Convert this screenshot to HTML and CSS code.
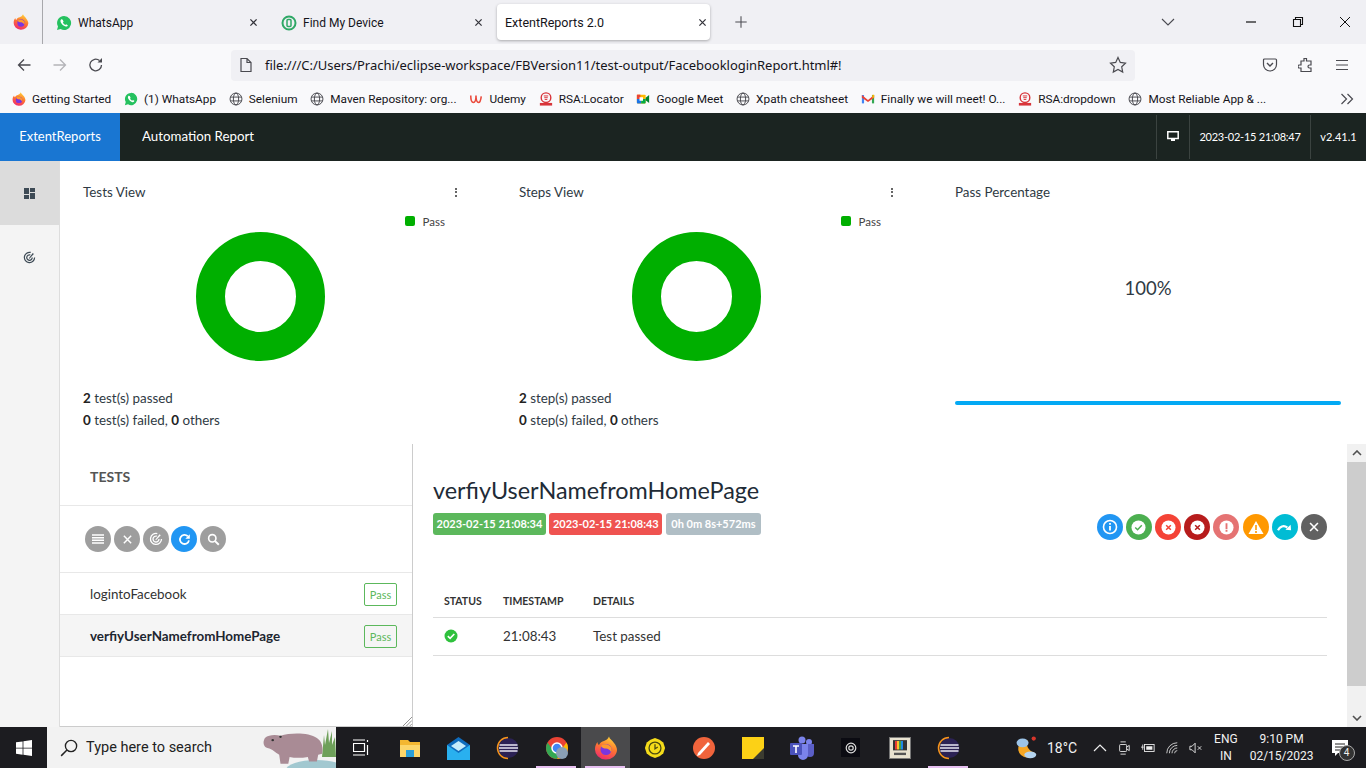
FILE: index.html
```html
<!DOCTYPE html>
<html lang="en">
<head>
    <meta charset="UTF-8">
    <title>ExtentReports 2.0</title>
    <link rel="stylesheet" href="styles.css">
</head>
<body>
    <svg class="defs" width="0" height="0">
        <defs>
            <linearGradient id="fox" x1="0.7" y1="0" x2="0.3" y2="1">
                <stop offset="0" stop-color="#ffd53a"/>
                <stop offset="0.45" stop-color="#ff7a2e"/>
                <stop offset="1" stop-color="#f0286e"/>
            </linearGradient>
        </defs>
        <symbol id="firefox" viewBox="0 0 24 24">
            <path d="M15 .5c.5 2.500 3 3.500 5 6.500 2 2.500 3 5 3 7a11 10 0 1 1-22-1c0-3 1-5 2.500-7 0 1.500.5 2.500 1.500 3 1-2.500 3-3.500 5-4 2-.7 4-2 5-4.500z" fill="url(#fox)"/>
            <circle cx="12" cy="13.500" r="5.500" fill="#7a35e0"/>
            <path d="M7 10c2-2 6-2.500 9 0 1.500 1.500 2 4 1 6-1-2-3-3.500-5-3.500-2 0-4-.5-5-2.500z" fill="#ff9a2e"/>
        </symbol>
        <symbol id="whatsapp" viewBox="0 0 24 24">
            <path d="M12 1.500a10.500 10.500 0 0 0-9 15.800L1.500 22.500l5.400-1.400A10.500 10.500 0 1 0 12 1.500z" fill="#25c15f"/>
            <path d="M8.500 6.500c-.8 0-1.800 1-1.800 2.600 0 3 4.300 8 8.300 8.300 1.500 0 2.700-1 2.700-2.200l-2.500-1.400-1.200 1.200c-1.500-.5-3-2-3.700-3.700l1.100-1.200-1.300-3z" fill="#fff"/>
        </symbol>
        <symbol id="globe" viewBox="0 0 16 16">
            <g fill="none" stroke="#4a4a50" stroke-width="1.100">
                <circle cx="8" cy="8" r="6.800"/>
                <ellipse cx="8" cy="8" rx="3" ry="6.800"/>
                <path d="M1.500 5.800h13M1.500 10.200h13"/>
            </g>
        </symbol>
        <symbol id="rsa" viewBox="0 0 16 16">
            <circle cx="8" cy="6.500" r="5.500" fill="none" stroke="#d8343a" stroke-width="1.600"/>
            <path d="M5.500 4.500h5M6 6.500h4M6.500 8.500h3" stroke="#d8343a" stroke-width="1.100"/>
            <rect x="1" y="12.500" width="14" height="3" fill="#d8343a"/>
        </symbol>
        <symbol id="eclipse" viewBox="0 0 24 24">
            <circle cx="12.500" cy="12" r="10" fill="#2c2255"/>
            <path d="M12 1.500a10.500 10.500 0 0 0 0 21" fill="none" stroke="#f7941e" stroke-width="1.500"/>
            <path d="M3.500 9h18M3 12h19M3.500 15h18" stroke="#e8e6f2" stroke-width="1.500"/>
        </symbol>
        <symbol id="radar" viewBox="0 0 16 16">
            <g fill="none" stroke="currentColor" stroke-width="1.500">
                <path d="M9.500 1.800A6.300 6.300 0 1 0 14.300 8"/>
                <path d="M9 4.800A3.400 3.400 0 1 0 11.400 8"/>
            </g>
            <path d="M7.200 8.800 12 2.500l1.400 1.100-5.400 5.800z" fill="currentColor"/>
        </symbol>
        <symbol id="cross" viewBox="0 0 16 16">
            <path d="M3.500 3.500l9 9M12.500 3.500l-9 9" fill="none" stroke="currentColor" stroke-width="1.800"/>
        </symbol>
    </svg>

    <div class="window">
        <div class="tabstrip">
            <div class="ff-button"><svg class="ico-16"><use href="#firefox"/></svg></div>
            <div class="tab">
                <svg class="ico-16"><use href="#whatsapp"/></svg>
                <span class="tab-title">WhatsApp</span>
                <svg class="tab-close"><use href="#cross"/></svg>
            </div>
            <div class="tab">
                <svg class="ico-16" viewBox="0 0 16 16"><circle cx="8" cy="8" r="6.500" fill="none" stroke="#2fa866" stroke-width="2"/><rect x="6" y="4.500" width="4" height="7" rx="1" fill="none" stroke="#2fa866" stroke-width="1.500"/></svg>
                <span class="tab-title">Find My Device</span>
                <svg class="tab-close"><use href="#cross"/></svg>
            </div>
            <div class="tab tab-active">
                <span class="tab-title">ExtentReports 2.0</span>
                <svg class="tab-close"><use href="#cross"/></svg>
            </div>
            <svg class="new-tab" viewBox="0 0 16 16"><path d="M8 1.500v13M1.500 8h13" stroke="#4a4a50" stroke-width="1.200"/></svg>
            <svg class="tab-list" viewBox="0 0 14 8"><path d="M1 1l6 6 6-6" fill="none" stroke="#4a4a50" stroke-width="1.100"/></svg>
            <div class="win-controls">
                <svg class="win-btn" viewBox="0 0 12 12"><path d="M1 6h10" stroke="#111" stroke-width="1.200"/></svg>
                <svg class="win-btn" viewBox="0 0 12 12"><path d="M1.500 3.500h7v7h-7zM3.500 3.500v-2h7v7h-2" fill="none" stroke="#111" stroke-width="1.100"/></svg>
                <svg class="win-btn" viewBox="0 0 12 12"><path d="M1 1l10 10M11 1L1 11" stroke="#111" stroke-width="1"/></svg>
            </div>
        </div>

        <div class="toolbar">
            <svg class="tool-ico back" viewBox="0 0 16 16"><path d="M14.500 8h-12M8 2.500 2.500 8 8 13.500" fill="none" stroke="#4a4a50" stroke-width="1.300"/></svg>
            <svg class="tool-ico forward" viewBox="0 0 16 16"><path d="M1.500 8h12M8 2.500 13.500 8 8 13.500" fill="none" stroke="#b4b4b8" stroke-width="1.300"/></svg>
            <svg class="tool-ico reload" viewBox="0 0 16 16"><path d="M13.500 8a5.800 5.800 0 1 1-2-4.400" fill="none" stroke="#4a4a50" stroke-width="1.300"/><path d="M14 1v4.500H9.500z" fill="#4a4a50"/></svg>
            <div class="urlbar">
                <svg class="page-ico" viewBox="0 0 14 16"><path d="M2 1.500h6l4 4v9H2zM8 1.500v4h4" fill="none" stroke="#4a4a50" stroke-width="1.200"/></svg>
                <span class="url-text">file:///C:/Users/Prachi/eclipse-workspace/FBVersion11/test-output/FacebookloginReport.html#!</span>
                <svg class="star" viewBox="0 0 18 18"><path d="M9 1.500l2.300 4.900 5.200.7-3.800 3.700 1 5.300L9 13.500l-4.700 2.600 1-5.300L1.500 7.100l5.200-.7z" fill="none" stroke="#4a4a50" stroke-width="1.200"/></svg>
            </div>
            <div class="tool-right">
                <svg class="ico-16" viewBox="0 0 16 16"><path d="M2.500 2h11c.6 0 1 .4 1 1v4.500a6.500 6.500 0 0 1-13 0V3c0-.6.4-1 1-1z" fill="none" stroke="#4a4a50" stroke-width="1.200"/><path d="M5 6l3 3 3-3" fill="none" stroke="#4a4a50" stroke-width="1.400"/></svg>
                <svg class="ico-16" viewBox="0 0 16 16"><path d="M6 1.500h2.500V4H13v4h-1.500a1.500 1.500 0 0 0 0 3H13v3.500H3V11H1.500a1.500 1.500 0 0 1 0-3H3V4h3z" fill="none" stroke="#4a4a50" stroke-width="1.200"/></svg>
                <svg class="ico-16" viewBox="0 0 16 16"><path d="M2 3.500h12M2 8h12M2 12.500h12" stroke="#4a4a50" stroke-width="1.200"/></svg>
            </div>
        </div>

        <div class="bookmarks">
            <div class="bm"><svg class="ico-14"><use href="#firefox"/></svg><span>Getting Started</span></div>
            <div class="bm"><svg class="ico-14"><use href="#whatsapp"/></svg><span>(1) WhatsApp</span></div>
            <div class="bm"><svg class="ico-14"><use href="#globe"/></svg><span>Selenium</span></div>
            <div class="bm"><svg class="ico-14"><use href="#globe"/></svg><span>Maven Repository: org...</span></div>
            <div class="bm"><svg class="ico-14" viewBox="0 0 16 16"><path d="M2 4c0 5 1 8 3 8s3-4 3-8c0 5 1 8 3 8s2.500-3 3-7" fill="none" stroke="#ea4a3c" stroke-width="1.800"/></svg><span>Udemy</span></div>
            <div class="bm"><svg class="ico-14"><use href="#rsa"/></svg><span>RSA:Locator</span></div>
            <div class="bm"><svg class="ico-14" viewBox="0 0 16 16"><rect x="1" y="3" width="10" height="10" rx="1" fill="#ffba00"/><path d="M1 8h5v5H2a1 1 0 0 1-1-1z" fill="#1a73e8"/><path d="M6 8h5v4a1 1 0 0 1-1 1H6z" fill="#00ac47"/><path d="M11 6.500l4-3v9l-4-3z" fill="#00832d"/><path d="M1 3h4v5H1z" fill="#ea4335"/><rect x="4" y="6" width="4" height="4" fill="#fff"/></svg><span>Google Meet</span></div>
            <div class="bm"><svg class="ico-14"><use href="#globe"/></svg><span>Xpath cheatsheet</span></div>
            <div class="bm"><svg class="ico-14" viewBox="0 0 16 16"><path d="M1 3.500h2.500V13H1z" fill="#4285f4"/><path d="M12.500 3.500H15V13h-2.500z" fill="#34a853"/><path d="M1 3.500l7 5.500 7-5.500v3l-7 5-7-5z" fill="#ea4335"/><path d="M13 3h2v3l-2 1.500z" fill="#fbbc04"/></svg><span>Finally we will meet! O...</span></div>
            <div class="bm"><svg class="ico-14"><use href="#rsa"/></svg><span>RSA:dropdown</span></div>
            <div class="bm"><svg class="ico-14"><use href="#globe"/></svg><span>Most Reliable App &amp; ...</span></div>
            <svg class="bm-more" viewBox="0 0 14 12"><path d="M1.500 1l5 5-5 5M7.500 1l5 5-5 5" fill="none" stroke="#4a4a50" stroke-width="1.200"/></svg>
        </div>

        <header class="topbar">
            <div class="brand">ExtentReports</div>
            <div class="report-name">Automation Report</div>
            <div class="top-right">
                <div class="top-cell top-ico">
                    <svg width="12" height="11" viewBox="0 0 12 11"><path d="M.8.800h10.400v6.700H.8z" fill="none" stroke="#fff" stroke-width="1.500"/><path d="M4 10h4V8H4z" fill="#fff"/></svg>
                </div>
                <div class="top-cell top-date">2023-02-15 21:08:47</div>
                <div class="top-cell top-ver">v2.41.1</div>
            </div>
        </header>

        <div class="content">
            <nav class="side-nav">
                <div class="side-item side-active">
                    <svg width="11" height="11" viewBox="0 0 11 11" fill="#3d4a55"><path d="M0 0h5v6H0zM6 0h5v4H6zM0 7h5v4H0zM6 5h5v6H6z"/></svg>
                </div>
                <div class="side-item">
                    <svg class="side-radar"><use href="#radar"/></svg>
                </div>
            </nav>

            <main class="report">
                <section class="dashboard">
                    <div class="dash-card">
                        <div class="dash-head"><span>Tests View</span><span class="dots"><i></i><i></i><i></i></span></div>
                        <div class="legend"><i class="legend-box"></i>Pass</div>
                        <div class="donut-wrap"><div class="donut"></div></div>
                        <p class="dash-line"><b>2</b> test(s) passed</p>
                        <p class="dash-line"><b>0</b> test(s) failed, <b>0</b> others</p>
                    </div>
                    <div class="dash-card">
                        <div class="dash-head"><span>Steps View</span><span class="dots"><i></i><i></i><i></i></span></div>
                        <div class="legend"><i class="legend-box"></i>Pass</div>
                        <div class="donut-wrap"><div class="donut"></div></div>
                        <p class="dash-line"><b>2</b> step(s) passed</p>
                        <p class="dash-line"><b>0</b> step(s) failed, <b>0</b> others</p>
                    </div>
                    <div class="dash-card dash-percent">
                        <div class="dash-head"><span>Pass Percentage</span></div>
                        <div class="percent-value">100%</div>
                        <div class="percent-bar"></div>
                    </div>
                </section>

                <section class="split">
                    <aside class="test-list">
                        <h3 class="list-title">TESTS</h3>
                        <div class="list-tools">
                            <span class="round grey"><svg width="12" height="10" viewBox="0 0 12 10"><path d="M0 1h12M0 3.700h12M0 6.300h12M0 9h12" stroke="#fff" stroke-width="1.600"/></svg></span>
                            <span class="round grey"><svg width="13" height="13"><use href="#cross"/></svg></span>
                            <span class="round grey"><svg width="14" height="14"><use href="#radar"/></svg></span>
                            <span class="round blue"><svg width="13" height="13" viewBox="0 0 16 16"><path d="M13.500 9a5.600 5.600 0 1 1-1.500-5" fill="none" stroke="#fff" stroke-width="2.200"/><path d="M14.500 1.500V7H9z" fill="#fff"/></svg></span>
                            <span class="round grey"><svg width="13" height="13" viewBox="0 0 16 16"><circle cx="6.500" cy="6.500" r="4.500" fill="none" stroke="#fff" stroke-width="2"/><path d="M10 10l4.500 4.500" stroke="#fff" stroke-width="2.400"/></svg></span>
                        </div>
                        <div class="test-row"><span>logintoFacebook</span><span class="pass-tag">Pass</span></div>
                        <div class="test-row test-row-on"><span>verfiyUserNamefromHomePage</span><span class="pass-tag">Pass</span></div>
                        <svg class="resize-grip" viewBox="0 0 8 8"><path d="M0 8l8-8M3 8l5-5M6 8l2-2" stroke="#888" stroke-width=".8"/></svg>
                    </aside>

                    <div class="test-detail">
                        <div class="detail-head">
                            <div>
                                <h2 class="detail-title">verfiyUserNamefromHomePage</h2>
                                <div class="labels">
                                    <span class="label l-green">2023-02-15 21:08:34</span>
                                    <span class="label l-red">2023-02-15 21:08:43</span>
                                    <span class="label l-grey">0h 0m 8s+572ms</span>
                                </div>
                            </div>
                            <div class="status-tools">
                                <span class="round c-info"><svg width="16" height="16" viewBox="0 0 16 16"><circle cx="8" cy="8" r="6.500" fill="none" stroke="#fff" stroke-width="1.600"/><path d="M8 7v4.500M8 4v1.800" stroke="#fff" stroke-width="1.800"/></svg></span>
                                <span class="round c-pass"><svg width="15" height="15" viewBox="0 0 16 16"><circle cx="8" cy="8" r="7.500" fill="#fff"/><path d="M4.500 8l2.500 2.500 4.500-5" fill="none" stroke="#4caf50" stroke-width="1.500"/></svg></span>
                                <span class="round c-fail"><svg width="15" height="15" viewBox="0 0 16 16"><circle cx="8" cy="8" r="7.500" fill="#fff"/><path d="M5.500 5.500l5 5M10.500 5.500l-5 5" stroke="#f44336" stroke-width="1.600"/></svg></span>
                                <span class="round c-fatal"><svg width="15" height="15" viewBox="0 0 16 16"><circle cx="8" cy="8" r="7.500" fill="#fff"/><path d="M5.500 5.500l5 5M10.500 5.500l-5 5" stroke="#b71c1c" stroke-width="1.600"/></svg></span>
                                <span class="round c-error"><svg width="15" height="15" viewBox="0 0 16 16"><circle cx="8" cy="8" r="7.500" fill="#fff"/><path d="M8 3.500v6M8 10.500v2" stroke="#e57373" stroke-width="2"/></svg></span>
                                <span class="round c-warn"><svg width="16" height="15" viewBox="0 0 16 15"><path d="M8 1l7.500 13H.5z" fill="#fff"/><path d="M8 5v5M8 11v2" stroke="#ff9800" stroke-width="1.600"/></svg></span>
                                <span class="round c-skip"><svg width="15" height="13" viewBox="0 0 16 12"><path d="M1 9c2-4 6-6 10-3" fill="none" stroke="#fff" stroke-width="2.400"/><path d="M9 8.500l6 .5-.5-6z" fill="#fff"/></svg></span>
                                <span class="round c-clear"><svg width="14" height="14"><use href="#cross"/></svg></span>
                            </div>
                        </div>
                        <table class="log-table">
                            <thead>
                                <tr><th class="col-status">STATUS</th><th class="col-time">TIMESTAMP</th><th>DETAILS</th></tr>
                            </thead>
                            <tbody>
                                <tr>
                                    <td><svg class="ok-ico" viewBox="0 0 14 14"><circle cx="7" cy="7" r="6.500" fill="#2fc13d"/><path d="M3.800 7.200l2.300 2.200 4.200-4.400" fill="none" stroke="#fff" stroke-width="1.600"/></svg></td>
                                    <td>21:08:43</td>
                                    <td>Test passed</td>
                                </tr>
                            </tbody>
                        </table>
                    </div>
                </section>
            </main>

            <div class="scrollbar">
                <svg class="scroll-arrow" viewBox="0 0 10 6"><path d="M1 5l4-4 4 4" fill="none" stroke="#505050" stroke-width="1.600"/></svg>
                <div class="scroll-track"><div class="scroll-thumb"></div></div>
                <svg class="scroll-arrow" viewBox="0 0 10 6"><path d="M1 1l4 4 4-4" fill="none" stroke="#505050" stroke-width="1.600"/></svg>
            </div>
        </div>

        <footer class="taskbar">
            <div class="start">
                <svg width="16" height="16" viewBox="0 0 16 16" fill="#fff"><path d="M0 2.300l6.600-.9v6.300H0zM7.400 1.300L16 0v7.700H7.400zM0 8.400h6.600v6.300L0 13.800zM7.400 8.400H16V16l-8.600-1.200z"/></svg>
            </div>
            <div class="search-box">
                <svg class="search-ico" viewBox="0 0 16 16"><circle cx="9.800" cy="6.200" r="5" fill="none" stroke="#222" stroke-width="1.200"/><path d="M6.200 9.800L1 15" stroke="#222" stroke-width="1.300"/></svg>
                <span class="search-text">Type here to search</span>
                <svg class="hippo" width="76" height="41" viewBox="0 0 76 41">
                    <ellipse cx="56" cy="43" rx="30" ry="10" fill="#a2c8d0"/>
                    <path d="M62 30l2-22 1 10 3-16 1 14 3-12 0 14 3-8 1 20z" fill="#6ea05a"/>
                    <g transform="translate(1 2) scale(1.300 1.120)">
                        <path d="M3 8c3-3 8-3 12-2 8-3 22-3 28 2 4 3 5 9 4 14l-3 1-1 6h-6l-1-4c-5 1-10 1-14 0l-1 6h-6l-1-8c-3-2-5-5-9-6-3-1-4-5-2-9z" fill="#a98b95"/>
                        <circle cx="9" cy="10" r="1" fill="#333"/><circle cx="15" cy="7" r="1" fill="#333"/>
                    </g>
                </svg>
            </div>
            <div class="task-icons">
                <div class="task-slot"><svg width="16" height="17" viewBox="0 0 16 17"><path d="M0 1h12M0 16h12M.5 4.500h11v8H.5zM14.500 1v2M14.500 6v10" fill="none" stroke="#fff" stroke-width="1.200"/></svg></div>
                <div class="task-slot"><svg width="22" height="22" viewBox="0 0 22 22"><path d="M1 3h8l2 2h10v15H1z" fill="#f3b731"/><path d="M1 8h20v12H1z" fill="#fcd66a"/><path d="M7 13h8v7H7z" fill="#2a9fd8"/></svg></div>
                <div class="task-slot"><svg width="25" height="24" viewBox="0 0 25 24"><path d="M12.500 1L24 9v15H1V9z" fill="#0f6cbd"/><path d="M1 9l11.500 8L24 9v15H1z" fill="#29b0ef"/><path d="M5 10l7.500-5 7.500 5-7.500 5z" fill="#c6ecfb"/></svg></div>
                <div class="task-slot"><svg class="ico-24"><use href="#eclipse"/></svg></div>
                <div class="task-slot task-open"><svg width="24" height="24" viewBox="0 0 24 24"><circle cx="12" cy="12" r="11" fill="#ea4335"/><path d="M21.500 6.500A11 11 0 0 1 12 23l4-9z" fill="#fbbc04"/><path d="M2.500 6.500A11 11 0 0 0 12 23l4-9H8z" fill="#34a853"/><circle cx="12" cy="12" r="5" fill="#4285f4" stroke="#fff" stroke-width="1.500"/><circle cx="17" cy="17" r="6" fill="#8a9fb5"/></svg></div>
                <div class="task-slot task-open task-current"><svg class="ico-24"><use href="#firefox"/></svg></div>
                <div class="task-slot"><svg width="22" height="22" viewBox="0 0 22 24"><path d="M11 1l5 2 4 3 2 6-2 6-4 3-5 2-5-2-4-3-2-6 2-6 4-3z" fill="#f5dc1a"/><circle cx="11" cy="12" r="6.500" fill="none" stroke="#4a4a10" stroke-width="1.400"/><path d="M11 8v5l3-2" fill="none" stroke="#4a4a10" stroke-width="1.400"/></svg></div>
                <div class="task-slot"><svg width="22" height="22" viewBox="0 0 22 22"><circle cx="11" cy="11" r="11" fill="#f0643c"/><path d="M5 16L15 5l2 2L7 18l-3 1z" fill="#fff"/></svg></div>
                <div class="task-slot"><svg width="22" height="22" viewBox="0 0 22 22"><path d="M0 0h22v22H0z" fill="#fcd116"/><path d="M22 11v11H11z" fill="#3c3c30"/></svg></div>
                <div class="task-slot"><svg width="24" height="24" viewBox="0 0 24 24"><circle cx="19" cy="6" r="3" fill="#7b83eb"/><circle cx="12" cy="4" r="3.500" fill="#7b83eb"/><path d="M14 8h10v9a4 4 0 0 1-8 0z" fill="#5b5fc7"/><path d="M7 8h11v11a5 5 0 0 1-10 0z" fill="#7b83eb"/><rect y="7" width="12" height="12" rx="1" fill="#4b53bc"/><path d="M3 10h6M6 10v7" stroke="#fff" stroke-width="1.600"/></svg></div>
                <div class="task-slot"><span class="dark-tile"><svg width="12" height="12" viewBox="0 0 12 12"><circle cx="6" cy="6" r="4.800" fill="none" stroke="#ddd" stroke-width="1.200"/><circle cx="6" cy="6" r="2.200" fill="none" stroke="#ddd" stroke-width="1.200"/></svg></span></div>
                <div class="task-slot"><svg width="22" height="22" viewBox="0 0 22 28" preserveAspectRatio="none"><rect x=".5" y=".5" width="21" height="27" fill="#e8e2d0" stroke="#777"/><rect x="4" y="4" width="14" height="13" fill="#333"/><path d="M6 5h2v11H6z" fill="#e53935"/><path d="M8 5h2v11H8z" fill="#fbc02d"/><path d="M10 5h2v11h-2z" fill="#43a047"/><path d="M12 5h2v11h-2z" fill="#1e88e5"/><path d="M5 20h12v3H5z" fill="#555"/></svg></div>
                <div class="task-slot task-open"><svg class="ico-24"><use href="#eclipse"/></svg></div>
            </div>
            <div class="tray">
                <svg class="weather" width="24" height="24" viewBox="0 0 24 28"><path d="M14 5a10 10 0 1 0 8 14A10 10 0 0 1 14 5z" fill="#f5a623"/><ellipse cx="8" cy="8" rx="7" ry="5" fill="#9cc4e8"/><ellipse cx="17" cy="22" rx="7" ry="4" fill="#b4d4f0"/><circle cx="21" cy="3" r="2.500" fill="#d9362b"/></svg>
                <span class="temp">18°C</span>
                <svg class="tray-ico caret" viewBox="0 0 14 8"><path d="M1 7l6-6 6 6" fill="none" stroke="#eee" stroke-width="1.200"/></svg>
                <svg class="tray-ico" viewBox="0 0 16 16"><path d="M4 1h6M4 15h6" stroke="#eee"/><rect x="3" y="4" width="8" height="8" rx="1" fill="none" stroke="#eee"/><path d="M11 7l3-2v6l-3-2" fill="none" stroke="#eee"/></svg>
                <svg class="tray-ico" viewBox="0 0 16 16"><rect x="4" y="4" width="11" height="8" fill="none" stroke="#eee"/><rect x="6" y="6" width="7" height="4" fill="#eee"/><path d="M0 7h3M2 4v6" stroke="#eee"/></svg>
                <svg class="tray-ico" viewBox="0 0 16 16"><path d="M2 14A12 12 0 0 1 14 2M5 14a9 9 0 0 1 9-9M8 14a6 6 0 0 1 6-6M11 14a3 3 0 0 1 3-3" fill="none" stroke="#ddd"/></svg>
                <svg class="tray-ico" viewBox="0 0 16 16"><path d="M1 6h2.500L7 2.500v11L3.500 10H1z" fill="none" stroke="#eee"/><path d="M10 6l4 4M14 6l-4 4" stroke="#eee"/></svg>
                <div class="lang"><span>ENG</span><span>IN</span></div>
                <div class="clock"><span>9:10 PM</span><span>02/15/2023</span></div>
                <div class="notif">
                    <svg width="16" height="16" viewBox="0 0 16 16"><path d="M0 0h16v13H6l-3 3v-3H0z" fill="#fff"/><path d="M3 4h10M3 7h10M3 10h7" stroke="#222"/></svg>
                    <span class="notif-count">4</span>
                </div>
            </div>
        </footer>
    </div>
</body>
</html>
```

FILE: styles.css
```css
* {
    box-sizing: border-box;
}

html, body {
    margin: 0;
    padding: 0;
    height: 100%;
    overflow: hidden;
}

body {
    font-family: Roboto, sans-serif;
    color: #222;
}

svg {
    display: block;
    flex: none;
}

.defs {
    position: absolute;
}

.window {
    display: flex;
    flex-direction: column;
    width: 1366px;
    height: 768px;
}

.ico-14 { width: 14px; height: 14px; }
.ico-16 { width: 16px; height: 16px; }
.ico-24 { width: 24px; height: 24px; }

/* browser chrome */
.tabstrip {
    display: flex;
    align-items: center;
    height: 44px;
    background: #f0f0f4;
    color: #15141a;
    font-size: 12px;
}

.ff-button {
    display: flex;
    align-items: center;
    justify-content: center;
    width: 43px;
    height: 44px;
    border-right: 1px solid #a8a8ac;
}

.tab {
    display: flex;
    align-items: center;
    gap: 6px;
    width: 225px;
    height: 36px;
    padding: 1px 9px 0 13px;
    flex: none;
}

.tab-title {
    flex: 1;
}

.tab-close {
    width: 11px;
    height: 11px;
    color: #33333a;
}

.tab-active {
    width: 213px;
    margin-left: 4px;
    padding: 0 2px 0 8px;
    background: #fff;
    border-radius: 4px;
    box-shadow: 0 1px 3px rgba(0, 0, 0, 0.3);
    font-size: 12.500px;
}

.new-tab {
    width: 14px;
    height: 14px;
    margin-left: 24px;
}

.tab-list {
    width: 14px;
    height: 8px;
    margin-left: 413px;
}

.win-controls {
    display: flex;
    align-items: center;
    gap: 35px;
    margin-left: 70px;
}

.win-btn {
    width: 12px;
    height: 12px;
}

.toolbar {
    display: flex;
    align-items: center;
    height: 42px;
    background: #f9f9fb;
    font-family: 'Noto Sans', sans-serif;
    font-size: 13px;
}

.tool-ico {
    width: 16px;
    height: 16px;
}

.back { margin-left: 16px; }
.forward { margin-left: 20px; }
.reload { margin-left: 20px; }

.urlbar {
    display: flex;
    align-items: center;
    width: 904px;
    height: 31px;
    margin-left: 127px;
    padding: 0 8px;
    background: #f0f0f4;
    border-radius: 4px;
}

.page-ico {
    width: 14px;
    height: 16px;
}

.url-text {
    flex: 1;
    margin-left: 12px;
    color: #15141a;
    letter-spacing: -0.03px;
}

.star {
    width: 18px;
    height: 18px;
}

.tool-right {
    display: flex;
    gap: 20px;
    margin-left: 127px;
}

.bookmarks {
    display: flex;
    align-items: center;
    gap: 12.800px;
    height: 27px;
    padding: 0 12px 2px;
    background: #f9f9fb;
    font-size: 11.800px;
    color: #15141a;
    white-space: nowrap;
}

.bm {
    display: flex;
    align-items: center;
    gap: 6px;
}

.bm-more {
    width: 14px;
    height: 12px;
    margin-left: auto;
}

/* report header */
.topbar {
    display: flex;
    align-items: center;
    height: 48px;
    background: #1b2421;
    color: #fff;
    font-family: Lato, sans-serif;
    font-size: 13.300px;
}

.brand {
    display: flex;
    align-items: center;
    justify-content: center;
    width: 120px;
    height: 100%;
    padding-bottom: 2px;
    background: #1976d2;
    font-size: 13px;
}

.report-name {
    margin: 0 0 2px 22px;
}

.top-right {
    display: flex;
    align-items: center;
    margin-left: auto;
    height: 100%;
    font-size: 11px;
}

.top-cell {
    display: flex;
    align-items: center;
    justify-content: center;
    height: 44px;
    padding-bottom: 1px;
    border-left: 1px solid #3b4340;
}

.top-ico { width: 33px; }
.top-date { width: 121px; letter-spacing: -0.25px; }
.top-ver { width: 56px; }

/* report body */
.content {
    display: flex;
    height: 566px;
    background: #fff;
    font-family: Lato, sans-serif;
    font-size: 13.400px;
}

.side-nav {
    width: 60px;
    background: #f4f4f4;
    border-right: 1px solid #ddd;
}

.side-item {
    display: flex;
    align-items: center;
    justify-content: center;
    height: 64px;
}

.side-active {
    background: #dcdcdc;
}

.side-radar {
    width: 13px;
    height: 13px;
    color: #3d4a55;
}

.report {
    display: flex;
    flex-direction: column;
    width: 1287px;
}

.dashboard {
    display: flex;
    height: 283px;
    padding: 22px 0 0 23px;
}

.dash-card {
    position: relative;
    width: 436px;
    padding-right: 61px;
}

.dash-percent {
    width: 386px;
    padding-right: 0;
}

.dash-head {
    display: flex;
    justify-content: space-between;
    align-items: center;
    height: 18px;
    color: #2f3a44;
}

.dots {
    display: flex;
    flex-direction: column;
    gap: 1.500px;
    margin-right: 1px;
}

.dots i {
    width: 2px;
    height: 2px;
    background: #333;
    border-radius: 50%;
}

.legend {
    display: flex;
    align-items: center;
    justify-content: flex-end;
    gap: 8px;
    height: 16px;
    margin-top: 12px;
    padding-right: 13px;
    font-size: 11.500px;
    color: #444;
}

.legend-box {
    width: 10px;
    height: 10px;
    background: #00af00;
    border-radius: 2px;
}

.donut-wrap {
    display: flex;
    justify-content: center;
    height: 158px;
    padding: 3px 21px 0 0;
}

.donut {
    width: 129px;
    height: 129px;
    border: 29px solid #00af00;
    border-radius: 50%;
}

.dash-line {
    margin: 0;
    height: 22px;
    line-height: 22px;
    color: #2f3a44;
    white-space: nowrap;
}

.dash-line b {
    color: #222;
}

.percent-value {
    margin-top: 74px;
    text-align: center;
    font-size: 18.500px;
    line-height: 26px;
    color: #2f3a44;
}

.percent-bar {
    height: 4px;
    margin-top: 100px;
    background: #03a9f4;
    border-radius: 2px;
}

.split {
    display: flex;
    flex: 1;
    min-height: 0;
}

.test-list {
    position: relative;
    width: 353px;
    flex: none;
    border-right: 1px solid #ccc;
    border-bottom: 1px solid #ccc;
}

.resize-grip {
    position: absolute;
    right: 0;
    bottom: 0;
    width: 9px;
    height: 9px;
}

.list-title {
    height: 62px;
    margin: 0;
    padding: 0 30px;
    line-height: 66px;
    border-bottom: 1px solid #e8e8e8;
    font-size: 14px;
    font-weight: 700;
    color: #555;
}

.list-tools {
    display: flex;
    align-items: center;
    gap: 3px;
    height: 67px;
    padding-left: 25px;
    border-bottom: 1px solid #e8e8e8;
}

.list-tools .round:nth-child(3) { margin-right: -1px; }

.round {
    display: flex;
    align-items: center;
    justify-content: center;
    width: 26px;
    height: 26px;
    border-radius: 50%;
    color: #fff;
    flex: none;
}

.grey { background: #9e9e9e; }
.blue { background: #2196f3; }
.c-info { background: #2196f3; }
.c-pass { background: #4caf50; }
.c-fail { background: #f44336; }
.c-fatal { background: #b71c1c; }
.c-error { background: #e57373; }
.c-warn { background: #ff9800; }
.c-skip { background: #00bcd4; }
.c-clear { background: #616161; }

.test-row {
    display: flex;
    align-items: center;
    justify-content: space-between;
    height: 42px;
    padding: 0 15px 0 30px;
    border-bottom: 1px solid #e8e8e8;
    color: #333;
}

.test-row-on {
    background: #f5f5f5;
    font-weight: 700;
    color: #1d2630;
}

.pass-tag {
    width: 33px;
    height: 23px;
    margin-top: 1px;
    border: 1px solid #5cb85c;
    border-radius: 2px;
    line-height: 22px;
    text-align: center;
    font-size: 11px;
    font-weight: 400;
    color: #5cb85c;
}

.test-detail {
    flex: 1;
    padding: 0 20px;
}

.detail-head {
    display: flex;
    justify-content: space-between;
    align-items: flex-start;
    padding-top: 30px;
    height: 100px;
}

.detail-title {
    margin: 0 0 7px;
    font-size: 23.400px;
    font-weight: 400;
    line-height: 32px;
    color: #212b36;
}

.labels {
    display: flex;
    gap: 3.500px;
}

.label {
    height: 22px;
    padding: 0 3.500px;
    border-radius: 3px;
    line-height: 22px;
    font-size: 11px;
    font-weight: 700;
    color: #fff;
    white-space: nowrap;
}

.l-green { background: #5cb85c; }
.l-red { background: #ef5350; }
.l-grey { background: #b0bec5; padding: 0 5.500px; }

.status-tools {
    display: flex;
    gap: 3.200px;
    margin-top: 40px;
}

.log-table {
    width: 100%;
    margin-top: 40px;
    border-collapse: collapse;
    table-layout: fixed;
}

.log-table th {
    height: 33px;
    padding: 1px 11px 0;
    text-align: left;
    font-size: 10.500px;
    font-weight: 700;
    color: #333;
    border-bottom: 1px solid #ddd;
}

.log-table td {
    height: 38px;
    padding: 0 11px 1px;
    border-bottom: 1px solid #ddd;
    color: #333;
}

.col-status { width: 59px; }
.col-time { width: 90px; }

.ok-ico {
    width: 14px;
    height: 14px;
}

.scrollbar {
    display: flex;
    flex-direction: column;
    align-items: center;
    align-self: flex-end;
    width: 19px;
    height: 283px;
    background: #f1f1f1;
}

.scroll-arrow {
    width: 10px;
    height: 6px;
    margin: 6px 0;
}

.scroll-track {
    flex: 1;
    width: 100%;
}

.scroll-thumb {
    height: 224px;
    background: #cdcdcd;
}

/* windows taskbar */
.taskbar {
    display: flex;
    align-items: center;
    height: 41px;
    background: #1c1c20;
    color: #f2f2f2;
}

.start {
    display: flex;
    align-items: center;
    justify-content: center;
    flex: none;
    width: 47px;
    height: 100%;
}

.search-box {
    position: relative;
    display: flex;
    align-items: center;
    flex: none;
    width: 289px;
    height: 100%;
    padding-left: 13px;
    background: #f2f2f2;
    overflow: hidden;
    color: #222;
    font-size: 14.500px;
}

.search-ico {
    width: 18px;
    height: 18px;
}

.search-text {
    margin-left: 8px;
}

.hippo {
    position: absolute;
    right: 0;
    bottom: 0;
}

.task-icons {
    display: flex;
    flex: none;
    height: 100%;
}

.task-slot {
    position: relative;
    display: flex;
    align-items: center;
    justify-content: center;
    width: 49px;
    height: 100%;
}

.task-open::after {
    content: "";
    position: absolute;
    left: 4px;
    right: 5px;
    bottom: 0;
    height: 2px;
    background: #e6bff0;
}

.task-current {
    background: #4a4a4c;
}

.dark-tile {
    display: flex;
    align-items: center;
    justify-content: center;
    width: 19px;
    height: 19px;
    background: #0b0b12;
}

.tray {
    display: flex;
    align-items: center;
    flex: 1;
    min-width: 0;
    height: 100%;
    padding-left: 41px;
    font-size: 12px;
}

.temp {
    margin-left: 9px;
    font-size: 14px;
}

.tray-ico {
    width: 14px;
    height: 14px;
    margin-left: 10px;
}

.caret {
    height: 8px;
    margin-left: 16px;
}

.lang, .clock {
    display: flex;
    flex-direction: column;
    align-items: center;
    flex: none;
    padding-top: 1px;
    line-height: 17px;
}

.lang { margin-left: 11px; }
.clock { margin-left: 12px; }

.notif {
    position: relative;
    flex: none;
    margin-left: 18px;
}

.notif-count {
    position: absolute;
    left: 7px;
    top: 5px;
    width: 16px;
    height: 16px;
    border-radius: 50%;
    background: #333;
    border: 1px solid #aaa;
    text-align: center;
    line-height: 14px;
    font-size: 10px;
}
```
